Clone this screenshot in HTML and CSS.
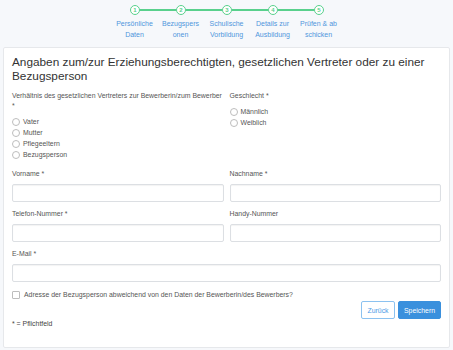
FILE: index.html
```html
<!DOCTYPE html>
<html lang="de">
<head>
    <meta charset="UTF-8">
    <meta name="viewport" content="width=device-width, initial-scale=1.0">
    <title>Bezugsperson</title>
    <link rel="stylesheet" href="styles.css">
</head>
<body>
    <div class="stepper">
        <div class="step-dots">
            <span class="dot">1</span><span class="bar"></span>
            <span class="dot">2</span><span class="bar"></span>
            <span class="dot">3</span><span class="bar"></span>
            <span class="dot">4</span><span class="bar"></span>
            <span class="dot">5</span>
        </div>
        <div class="step-labels">
            <span class="step-label">Persönliche Daten</span>
            <span class="step-label">Bezugspersonen</span>
            <span class="step-label">Schulische Vorbildung</span>
            <span class="step-label">Details zur Ausbildung</span>
            <span class="step-label">Prüfen &amp; ab schicken</span>
        </div>
    </div>

    <div class="card">
        <h2 class="card-title">Angaben zum/zur Erziehungsberechtigten, gesetzlichen Vertreter oder zu einer Bezugsperson</h2>

        <div class="row">
            <div class="col">
                <label class="field-label">Verhältnis des gesetzlichen Vertreters zur Bewerberin/zum Bewerber *</label>
                <label class="radio"><input type="radio" name="rel"> Vater</label>
                <label class="radio"><input type="radio" name="rel"> Mutter</label>
                <label class="radio"><input type="radio" name="rel"> Pflegeeltern</label>
                <label class="radio"><input type="radio" name="rel"> Bezugsperson</label>
            </div>
            <div class="col">
                <label class="field-label">Geschlecht *</label>
                <label class="radio"><input type="radio" name="sex"> Männlich</label>
                <label class="radio"><input type="radio" name="sex"> Weiblich</label>
            </div>
        </div>

        <div class="row fields">
            <div class="col">
                <label class="field-label">Vorname *</label>
                <input type="text" class="text-input">
            </div>
            <div class="col">
                <label class="field-label">Nachname *</label>
                <input type="text" class="text-input">
            </div>
        </div>

        <div class="row fields">
            <div class="col">
                <label class="field-label">Telefon-Nummer *</label>
                <input type="text" class="text-input">
            </div>
            <div class="col">
                <label class="field-label">Handy-Nummer</label>
                <input type="text" class="text-input">
            </div>
        </div>

        <div class="fields">
            <label class="field-label">E-Mail *</label>
            <input type="email" class="text-input">
        </div>

        <label class="check"><input type="checkbox"> Adresse der Bezugsperson abweichend von den Daten der Bewerberin/des Bewerbers?</label>

        <div class="actions">
            <button class="btn btn-outline">Zurück</button>
            <button class="btn btn-primary">Speichern</button>
        </div>

        <p class="note">* = Pflichtfeld</p>
    </div>
</body>
</html>
```

FILE: styles.css
```css
* {
    margin: 0;
    padding: 0;
    box-sizing: border-box;
}

body {
    font-family: 'Liberation Sans', Arial, sans-serif;
    background: #f6f8fb;
    color: #333;
    width: 453px;
    height: 350px;
    overflow: hidden;
}

/* stepper */
.stepper {
    padding-top: 5px;
    margin-bottom: 7px;
    display: flex;
    flex-direction: column;
    align-items: center;
}

.step-dots {
    display: flex;
    align-items: center;
    margin-left: 1px;
}

.dot {
    width: 10px;
    height: 10px;
    border: 1px solid #58d08c;
    border-radius: 50%;
    background: #fff;
    color: #58d08c;
    font-size: 6px;
    font-weight: bold;
    line-height: 8px;
    text-align: center;
}

.bar {
    width: 36px;
    height: 2px;
    background: #58d08c;
}

.step-labels {
    display: flex;
    margin-top: 3px;
}

.step-label {
    width: 46px;
    padding: 0 3px;
    font-size: 7px;
    line-height: 11px;
    color: #4f96dc;
    text-align: center;
    overflow-wrap: anywhere;
}

/* card */
.card {
    margin: 0 3px;
    height: 301px;
    background: #fff;
    border: 1px solid #e6e8eb;
    border-radius: 2px;
    padding: 7px 8px 0;
}

.card-title {
    font-size: 11.8px;
    font-weight: normal;
    line-height: 14px;
    color: #333;
    margin-bottom: 8px;
}

.row {
    display: flex;
    gap: 6px;
}

.col {
    flex: 1;
    display: flex;
    flex-direction: column;
    min-width: 0;
}

.field-label {
    display: block;
    font-size: 6.9px;
    line-height: 10px;
    color: #555;
    margin-bottom: 5px;
}

.radio {
    display: flex;
    align-items: center;
    gap: 3px;
    font-size: 6.9px;
    line-height: 11px;
    color: #555;
}

.radio input {
    appearance: none;
    width: 8px;
    height: 8px;
    border: 1px solid #bdbdbd;
    border-radius: 50%;
    background: #fff;
}

.fields {
    margin-top: 9px;
}

.row.fields + .row.fields,
.row.fields + .fields {
    margin-top: 7px;
}

.text-input {
    display: block;
    width: 100%;
    height: 18px;
    border: 1px solid #dcdfe3;
    border-radius: 2px;
    box-shadow: inset 0 1px 1px rgba(0, 0, 0, 0.05);
    font-size: 7px;
    outline: none;
}

.check {
    display: flex;
    align-items: center;
    gap: 4px;
    margin-top: 8px;
    font-size: 6.9px;
    line-height: 10px;
    color: #555;
}

.check input {
    appearance: none;
    width: 8px;
    height: 8px;
    border: 1px solid #bdbdbd;
    border-radius: 1px;
    background: #fff;
}

.actions {
    display: flex;
    justify-content: flex-end;
    gap: 3px;
    margin-top: 1px;
}

.btn {
    height: 18px;
    padding: 0 5px;
    font-family: inherit;
    font-size: 6.9px;
    border-radius: 2px;
    cursor: pointer;
}

.btn-outline {
    width: 34px;
    background: #fff;
    border: 1px solid #8cc2f0;
    color: #4a9be6;
}

.btn-primary {
    width: 43px;
    background: #3a90dd;
    border: 1px solid #3a90dd;
    color: #fff;
}

.note {
    font-size: 6.9px;
    line-height: 10px;
    color: #444;
    margin-top: 0;
}
```
